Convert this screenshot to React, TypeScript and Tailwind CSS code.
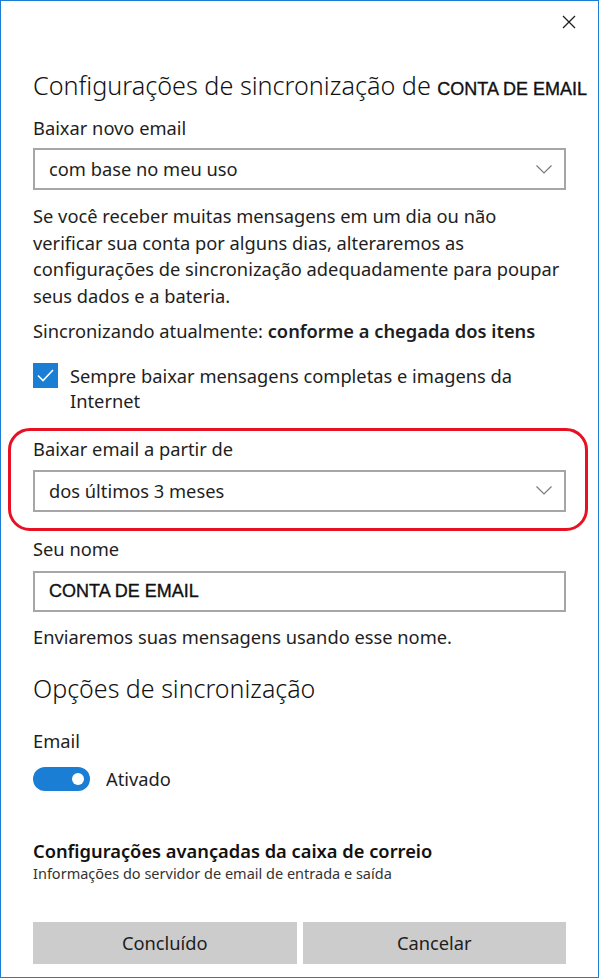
import { useState } from "react";

const sans = "font-['Noto_Sans','Open_Sans','DejaVu_Sans',sans-serif]";
const arial = "font-['Liberation_Sans',Arial,sans-serif]";

function Chevron() {
  return (
    <svg width="16" height="9" viewBox="0 0 16 9" className="shrink-0">
      <path d="M0.5 0.5 L8 8 L15.5 0.5" fill="none" stroke="#7a7a7a" strokeWidth="1.2" />
    </svg>
  );
}

function Select({ value }: { value: string }) {
  return (
    <div className="flex h-[42px] items-center justify-between border-2 border-[#a6a6a6] bg-white pl-[14px] pr-[12px]">
      <span className="text-[18.3px] leading-none text-[#1e1e1e]">{value}</span>
      <Chevron />
    </div>
  );
}

export default function App() {
  const [checked, setChecked] = useState(true);
  const [on, setOn] = useState(true);

  return (
    <div className={`h-[979px] w-[600px] bg-white ${sans}`}>
      <div className="flex h-[978px] w-[599px] flex-col border border-[#1a7fd4] bg-white px-8 text-[#1e1e1e]">
        {/* close button */}
        <div className="flex h-[42px] items-center justify-end">
          <button className="-mr-[10px] p-0">
            <svg width="14" height="14" viewBox="0 0 14 14">
              <path d="M1 1 L13 13 M13 1 L1 13" stroke="#1e1e1e" strokeWidth="1.3" />
            </svg>
          </button>
        </div>

        <h1 className="mt-[26px] whitespace-nowrap text-[25.2px] font-light leading-[32px] text-[#111]">
          Configurações de sincronização de{" "}
          <span className={`${arial} text-[18px] font-normal text-[#111] [-webkit-text-stroke:0.35px_#111]`}>
            CONTA DE EMAIL
          </span>
        </h1>

        <p className="mt-[11px] text-[18.3px] leading-[24px]">Baixar novo email</p>
        <div className="mt-[8px]">
          <Select value="com base no meu uso" />
        </div>

        <p className="mt-[13px] whitespace-nowrap text-[18.3px] leading-[26.7px]">
          Se você receber muitas mensagens em um dia ou não
          <br />
          verificar sua conta por alguns dias, alteraremos as
          <br />
          configurações de sincronização adequadamente para poupar
          <br />
          seus dados e a bateria.
        </p>

        <p className="mt-[9px] text-[18.3px] leading-[24px]">
          Sincronizando atualmente: <span className="font-semibold">conforme a chegada dos itens</span>
        </p>

        <label className="mt-[20px] flex items-start gap-[12px]" onClick={() => setChecked((c) => !c)}>
          <span
            className={`flex h-[25px] w-[25px] shrink-0 items-center justify-center ${
              checked ? "bg-[#1a7fd4]" : "border-2 border-[#333] bg-white"
            }`}
          >
            {checked && (
              <svg width="17" height="13" viewBox="0 0 17 13">
                <path d="M1 6.5 L6 11.5 L16 1" fill="none" stroke="#fff" strokeWidth="1.6" />
              </svg>
            )}
          </span>
          <span className="whitespace-nowrap text-[18.3px] leading-[25px]">
            Sempre baixar mensagens completas e imagens da
            <br />
            Internet
          </span>
        </label>

        {/* highlighted section */}
        <div className="-ml-[25px] -mr-[22px] mt-[15px] rounded-[22px] border-[3px] border-[#e81123] pb-[16px] pl-[22px] pr-[19px] pt-[6px]">
          <p className="text-[18.3px] leading-[24px]">Baixar email a partir de</p>
          <div className="mt-[9px]">
            <Select value="dos últimos 3 meses" />
          </div>
        </div>

        <p className="mt-[6px] text-[18.3px] leading-[24px]">Seu nome</p>
        <div className="mt-[10px] flex h-[41px] items-center border-2 border-[#a6a6a6] pl-[14px]">
          <span className={`${arial} text-[18px] text-[#111] [-webkit-text-stroke:0.35px_#111]`}>CONTA DE EMAIL</span>
        </div>
        <p className="mt-[13px] text-[18.3px] leading-[24px]">Enviaremos suas mensagens usando esse nome.</p>

        <h2 className="mt-[24px] text-[25px] font-light leading-[30px] text-[#111]">Opções de sincronização</h2>

        <p className="mt-[26px] text-[18.3px] leading-[24px]">Email</p>
        <div className="mt-[14px] flex items-center gap-[16px]">
          <button
            onClick={() => setOn((o) => !o)}
            className={`flex h-[24px] w-[57px] items-center rounded-full px-[6px] ${
              on ? "justify-end bg-[#1a7fd4]" : "justify-start border-2 border-[#333] bg-white"
            }`}
          >
            <span className={`h-[12px] w-[12px] rounded-full ${on ? "bg-white" : "bg-[#333]"}`} />
          </button>
          <span className="text-[18.3px] leading-[24px]">{on ? "Ativado" : "Desativado"}</span>
        </div>

        <p className="mt-[48px] text-[18.3px] font-semibold leading-[24px] text-[#111]">
          Configurações avançadas da caixa de correio
        </p>
        <p className="text-[14.5px] leading-[20px] text-[#333]">
          Informações do servidor de email de entrada e saída
        </p>

        <div className="mt-[39px] flex gap-[6px]">
          <button className="h-[42px] flex-1 bg-[#cccccc] text-[18.3px] text-[#1e1e1e]">Concluído</button>
          <button className="h-[42px] flex-1 bg-[#cccccc] text-[18.3px] text-[#1e1e1e]">Cancelar</button>
        </div>
      </div>
    </div>
  );
}
